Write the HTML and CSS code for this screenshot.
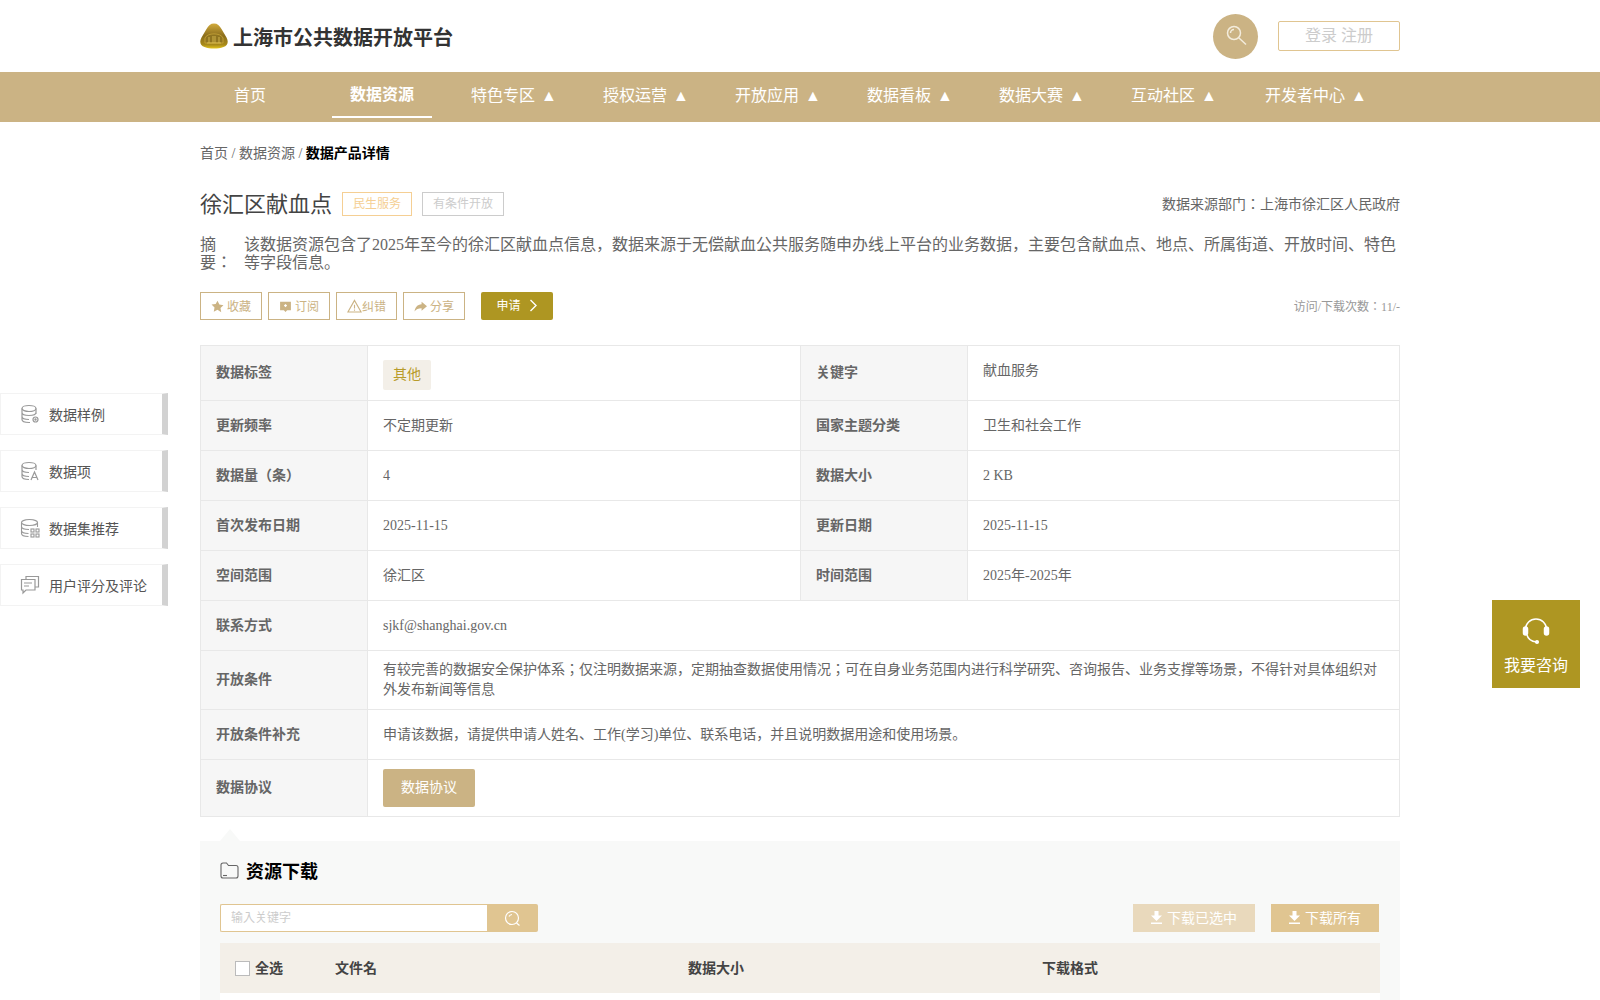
FILE: index.html
```html
<!DOCTYPE html>
<html>
<head>
    <meta charset="UTF-8">
    <title>上海市公共数据开放平台</title>
    <link rel="stylesheet" href="styles.css">
</head>
<body>
    <header class="top">
        <div class="inner top-row">
            <div class="brand">
                <svg class="brand-logo" width="28" height="26" viewBox="0 0 28 26">
                    <defs>
                        <linearGradient id="gold" x1="0" y1="0" x2="0" y2="1">
                            <stop offset="0" stop-color="#d2ab3c"/>
                            <stop offset="0.5" stop-color="#8a6d1c"/>
                            <stop offset="0.85" stop-color="#a88a1a"/>
                            <stop offset="1" stop-color="#e2c41e"/>
                        </linearGradient>
                    </defs>
                    <path d="M14 .5c3.500 0 5.500 2 7.500 5.500l5 8.500c2.500 4.500 1 8-3 9.500-5.500 2-13.500 2-19 0-4-1.500-5.500-5-3-9.500l5-8.500C8.500 2.500 10.500.5 14 .5z" fill="url(#gold)"/>
                    <path d="M5 15c2-5.500 16-5.500 18 0v5H5z" fill="#8f7420" stroke="#c9a63a" stroke-width=".8"/>
                    <path d="M9 14v6M13 13v7M15 13v7M19 14v6M7 20h14" stroke="#d8bb50" stroke-width=".9" fill="none"/>
                </svg>
                <span class="brand-name">上海市公共数据开放平台</span>
            </div>
            <div class="top-tools">
                <span class="search-circle">
                    <svg width="24" height="24" viewBox="0 0 24 24" fill="none" stroke="#f3ecdc" stroke-width="1.500">
                        <circle cx="10" cy="9" r="6.500"/>
                        <path d="M6.500 9a3.500 3.500 0 0 1 3.500-3.500M15 14l7 6.500"/>
                    </svg>
                </span>
                <a class="login-box">登录 注册</a>
            </div>
        </div>
    </header>

    <nav class="nav">
        <div class="inner nav-row">
            <a class="nav-item">首页</a>
            <a class="nav-item active">数据资源</a>
            <a class="nav-item">特色专区 <span class="arrow">▲</span></a>
            <a class="nav-item">授权运营 <span class="arrow">▲</span></a>
            <a class="nav-item">开放应用 <span class="arrow">▲</span></a>
            <a class="nav-item">数据看板 <span class="arrow">▲</span></a>
            <a class="nav-item">数据大赛 <span class="arrow">▲</span></a>
            <a class="nav-item">互动社区 <span class="arrow">▲</span></a>
            <a class="nav-item wide">开发者中心 <span class="arrow">▲</span></a>
        </div>
    </nav>

    <aside class="side">
        <a class="side-item">
            <svg width="20" height="20" viewBox="0 0 20 20" fill="none" stroke="#999" stroke-width="1.200">
                <ellipse cx="9" cy="4.500" rx="7" ry="3"/>
                <path d="M2 4.500v11c0 1.800 3 3 7 3h1M16 4.500V10M2 8.500c0 1.800 3 3 7 3s7-1.200 7-3M2 12.500c0 1.800 3 3 7 3"/>
                <circle cx="15.500" cy="15.500" r="2.500"/>
                <circle cx="15.500" cy="15.500" r=".6"/>
            </svg>
            <span>数据样例</span>
        </a>
        <a class="side-item">
            <svg width="20" height="20" viewBox="0 0 20 20" fill="none" stroke="#999" stroke-width="1.200">
                <ellipse cx="9" cy="4.500" rx="7" ry="3"/>
                <path d="M2 4.500v11c0 1.800 3 3 7 3M16 4.500V9M2 8.500c0 1.800 3 3 7 3M2 12.500c0 1.800 3 3 7 3M11 19l3.500-8 3.500 8M12.300 16.500h4.400"/>
            </svg>
            <span>数据项</span>
        </a>
        <a class="side-item">
            <svg width="20" height="20" viewBox="0 0 20 20" fill="none" stroke="#999" stroke-width="1.100">
                <ellipse cx="9.500" cy="4.500" rx="8" ry="3"/>
                <path d="M1.500 4.500v11c0 1.800 3 3 7 3M17.500 4.500V9M1.500 8.500c0 1.800 3 3 7.500 3M1.500 12.500c0 1.800 3 3 7 3"/>
                <rect x="11" y="11" width="3" height="3"/><rect x="16" y="11" width="3" height="3"/>
                <rect x="11" y="16" width="3" height="3"/><rect x="16" y="16" width="3" height="3"/>
            </svg>
            <span>数据集推荐</span>
        </a>
        <a class="side-item">
            <svg width="20" height="20" viewBox="0 0 20 20" fill="none" stroke="#999" stroke-width="1.200">
                <path d="M6 4V1.500h12.500V12H15"/>
                <path d="M1.500 4.500H15V15H6l-3 3v-3H1.500z"/>
                <path d="M4 8h8M4 11h5"/>
            </svg>
            <span>用户评分及评论</span>
        </a>
    </aside>

    <a class="consult">
        <svg width="28" height="28" viewBox="0 0 28 28" fill="none" stroke="#fff" stroke-width="1.500">
            <path d="M3.500 12a10.500 10 0 0 1 21 0"/>
            <rect x="1.500" y="10" width="4" height="8" rx="2" fill="#fff"/>
            <rect x="22.500" y="10" width="4" height="8" rx="2" fill="#fff"/>
            <path d="M5 18c1 4 5 6.500 9.500 7"/>
            <circle cx="15" cy="25" r="1.300" fill="#fff"/>
        </svg>
        <span>我要咨询</span>
    </a>

    <main class="inner">
        <div class="crumbs">首页 / 数据资源 / <b>数据产品详情</b></div>

        <div class="title-row">
            <h1 class="title">徐汇区献血点</h1>
            <span class="tag tag-gold">民生服务</span>
            <span class="tag tag-grey">有条件开放</span>
            <span class="source">数据来源部门：上海市徐汇区人民政府</span>
        </div>

        <div class="abstract">
            <span class="abstract-label">摘要：</span>
            <p class="abstract-text">该数据资源包含了2025年至今的徐汇区献血点信息，数据来源于无偿献血公共服务随申办线上平台的业务数据，主要包含献血点、地点、所属街道、开放时间、特色等字段信息。</p>
        </div>

        <div class="action-row">
            <a class="action">
                <svg width="13" height="13" viewBox="0 0 24 24" fill="#cbb384"><path d="M12 1.500l3.400 7 7.600 1-5.500 5.300 1.400 7.700L12 18l-6.900 3.500 1.400-7.700L1 8.500l7.600-1z"/></svg>
                收藏
            </a>
            <a class="action">
                <svg width="13" height="13" viewBox="0 0 24 24" fill="#cbb384"><path d="M2 3h20v16h-7l-3 3-3-3H2zM12 7.500l-3 2.500 3 3.500 3-3.500z" fill-rule="evenodd"/></svg>
                订阅
            </a>
            <a class="action tight">
                <svg width="15" height="14" viewBox="0 0 24 22" fill="none" stroke="#cbb384" stroke-width="1.800"><path d="M12 2L1.500 20.500h21zM12 9v6M12 16.500v2"/></svg>
                纠错
            </a>
            <a class="action">
                <svg width="13" height="13" viewBox="0 0 24 24" fill="#cbb384"><path d="M14 3l10 8.500L14 20v-5C8 15 4 17 1 21c1-7 5-12.500 13-13z"/></svg>
                分享
            </a>
            <a class="apply">申请
                <svg width="9" height="13" viewBox="0 0 9 13" fill="none" stroke="#fff" stroke-width="1.400"><path d="M1.500 1l5.500 5.500L1.500 12"/></svg>
            </a>
            <span class="visits">访问/下载次数：11/-</span>
        </div>

        <table class="info">
            <colgroup>
                <col class="col-label"><col class="col-value"><col class="col-label"><col>
            </colgroup>
            <tr class="row-tags">
                <th>数据标签</th>
                <td><span class="chip">其他</span></td>
                <th>关键字</th>
                <td class="keyword">献血服务</td>
            </tr>
            <tr>
                <th>更新频率</th><td>不定期更新</td>
                <th>国家主题分类</th><td>卫生和社会工作</td>
            </tr>
            <tr>
                <th>数据量（条）</th><td>4</td>
                <th>数据大小</th><td>2 KB</td>
            </tr>
            <tr>
                <th>首次发布日期</th><td>2025-11-15</td>
                <th>更新日期</th><td>2025-11-15</td>
            </tr>
            <tr>
                <th>空间范围</th><td>徐汇区</td>
                <th>时间范围</th><td>2025年-2025年</td>
            </tr>
            <tr>
                <th>联系方式</th><td colspan="3">sjkf@shanghai.gov.cn</td>
            </tr>
            <tr class="row-auto">
                <th>开放条件</th>
                <td colspan="3">有较完善的数据安全保护体系；仅注明数据来源，定期抽查数据使用情况；可在自身业务范围内进行科学研究、咨询报告、业务支撑等场景，不得针对具体组织对外发布新闻等信息</td>
            </tr>
            <tr>
                <th>开放条件补充</th>
                <td colspan="3">申请该数据，请提供申请人姓名、工作(学习)单位、联系电话，并且说明数据用途和使用场景。</td>
            </tr>
            <tr class="row-agree">
                <th>数据协议</th>
                <td colspan="3"><a class="agree-btn">数据协议</a></td>
            </tr>
        </table>

        <section class="download">
            <h2 class="download-title">
                <svg width="19" height="17" viewBox="0 0 19 17" fill="none" stroke="#666" stroke-width="1.100">
                    <path d="M1 3a2 2 0 0 1 2-2h3.500l2 2.500H16a2 2 0 0 1 2 2V14a2 2 0 0 1-2 2H3a2 2 0 0 1-2-2z"/>
                    <path d="M3 13.500h4"/>
                </svg>
                资源下载
            </h2>
            <div class="tools">
                <div class="search">
                    <input class="search-input" placeholder="输入关键字">
                    <span class="search-btn">
                        <svg width="17" height="17" viewBox="0 0 17 17" fill="none" stroke="#fff" stroke-width="1.200">
                            <circle cx="8" cy="8" r="6.500"/>
                            <path d="M5 6.500a3.500 3.500 0 0 1 3-2M12.500 13l3 2.500"/>
                        </svg>
                    </span>
                </div>
                <div class="dl-group">
                    <a class="dl-btn dim">
                        <svg width="11" height="13" viewBox="0 0 11 13" fill="#fff"><path d="M3.500 0h4v4.500H11l-5.500 5.500L0 4.500h3.500zM0 11.500h11V13H0z"/></svg>
                        下载已选中
                    </a>
                    <a class="dl-btn">
                        <svg width="11" height="13" viewBox="0 0 11 13" fill="#fff"><path d="M3.500 0h4v4.500H11l-5.500 5.500L0 4.500h3.500zM0 11.500h11V13H0z"/></svg>
                        下载所有
                    </a>
                </div>
            </div>
            <div class="file-head">
                <label class="col-check"><span class="check"></span>全选</label>
                <span class="col-name">文件名</span>
                <span class="col-size">数据大小</span>
                <span class="col-format">下载格式</span>
            </div>
            <div class="file-body"></div>
        </section>
    </main>
</body>
</html>
```

FILE: styles.css
```css
* {
    box-sizing: border-box;
}
body {
    margin: 0;
    color: #666;
    background: #fff;
    font-family: "Liberation Serif", "Noto Sans CJK JP", serif;
    font-size: 14px;
}
.inner {
    width: 1200px;
    margin: 0 auto;
}
.top {
    height: 72px;
}
.top-row {
    display: flex;
    align-items: center;
    justify-content: space-between;
    height: 72px;
}
.brand {
    display: flex;
    align-items: center;
    gap: 5px;
}
.brand-name {
    font-size: 20px;
    font-weight: bold;
    color: #333;
}
.top-tools {
    display: flex;
    align-items: center;
    gap: 20px;
}
.search-circle {
    display: flex;
    align-items: center;
    justify-content: center;
    width: 45px;
    height: 45px;
    border-radius: 50%;
    background: #cbb384;
}
.login-box {
    width: 122px;
    height: 30px;
    line-height: 28px;
    text-align: center;
    font-size: 16px;
    color: #ccc;
    border: 1px solid #e0c591;
    border-radius: 2px;
}
.nav {
    height: 50px;
    background: #cbb384;
}
.nav-row {
    display: flex;
    gap: 32px;
}
.nav-item {
    width: 100px;
    height: 46px;
    line-height: 47px;
    text-align: center;
    white-space: nowrap;
    font-size: 16px;
    color: #fff;
}
.nav-item.wide {
    width: 120px;
}
.nav-item.active {
    font-weight: bold;
    line-height: 45px;
    border-bottom: 2px solid #fff;
    height: 46px;
}
.arrow {
    margin-left: 2px;
}
.side {
    position: absolute;
    left: 0;
    top: 393px;
    width: 168px;
}
.side-item {
    display: flex;
    align-items: center;
    gap: 9px;
    height: 42px;
    margin-bottom: 15px;
    padding: 0 0 1px 20px;
    color: #555;
    background: #fff;
    border: 1px solid #f3f3f3;
    border-right: 6px solid #d2d2d2;
}
.side-item svg {
    margin-left: -1px;
}
.consult {
    position: fixed;
    left: 1492px;
    top: 600px;
    display: flex;
    flex-direction: column;
    align-items: center;
    width: 88px;
    height: 88px;
    padding-top: 17px;
    color: #fff;
    font-size: 16px;
    background: #ae9622;
}
.consult span {
    margin-top: 7px;
}
.crumbs {
    padding-top: 23px;
    height: 63px;
    line-height: 18px;
    color: #666;
}
.crumbs b {
    color: #000;
}
.title-row {
    display: flex;
    align-items: center;
    gap: 10px;
    height: 24px;
    margin-top: 7px;
}
.title {
    margin: 0 0 5px;
    font-size: 22px;
    font-weight: normal;
    color: #444;
}
.tag {
    height: 24px;
    line-height: 22px;
    padding: 0 10px;
    font-size: 12px;
    border: 1px solid;
}
.tag-gold {
    color: #f5cf94;
    border-color: #f5cf94;
}
.tag-grey {
    color: #ccc;
    border-color: #ccc;
}
.source {
    margin-left: auto;
    margin-bottom: 2px;
    color: #666;
}
.abstract {
    display: flex;
    margin-top: 20px;
    font-size: 16px;
    line-height: 18px;
    color: #666;
}
.abstract-label {
    flex: none;
    width: 32px;
    margin-right: 12px;
}
.abstract-text {
    margin: 0;
}
.action-row {
    display: flex;
    align-items: center;
    gap: 6px;
    height: 28px;
    margin-top: 20px;
}
.action {
    display: flex;
    align-items: center;
    justify-content: center;
    gap: 3px;
    width: 62px;
    height: 28px;
    font-size: 12px;
    color: #cbb384;
    border: 1px solid #cbb384;
}
.action.tight {
    gap: 0;
    width: 61px;
}
.apply {
    display: flex;
    align-items: center;
    justify-content: center;
    gap: 8px;
    width: 72px;
    height: 28px;
    margin-left: 10px;
    padding-bottom: 2px;
    font-size: 12px;
    color: #fff;
    background: #ae9622;
    border-radius: 2px;
}
.visits {
    margin-left: auto;
    font-size: 12px;
    color: #999;
}
.info {
    width: 1200px;
    margin-top: 25px;
    table-layout: fixed;
    border-collapse: collapse;
}
.col-label {
    width: 167px;
}
.col-value {
    width: 433px;
}
.info tr {
    height: 50px;
}
.info th,
.info td {
    padding: 0 15px;
    text-align: left;
    line-height: 20px;
    font-size: 14px;
    color: #666;
    border: 1px solid #e8e8e8;
}
.info th {
    background: #f6f6f6;
    font-weight: bold;
}
.info .row-tags {
    height: 55px;
}
.info .row-auto {
    height: 59px;
}
.info .row-agree {
    height: 57px;
}
.info .keyword {
    padding-bottom: 4px;
}
.chip {
    display: inline-block;
    width: 48px;
    height: 30px;
    margin-top: 4px;
    line-height: 30px;
    text-align: center;
    font-weight: normal;
    color: #b89b2a;
    background: #f3efe8;
    border-radius: 2px;
}
.agree-btn {
    display: block;
    width: 92px;
    height: 38px;
    line-height: 38px;
    text-align: center;
    color: #fff;
    background: #cbb384;
    border-radius: 2px;
}
.download {
    position: relative;
    margin-top: 24px;
    padding: 0 20px;
    background: #f8f9f8;
}
.download::before {
    content: "";
    position: absolute;
    left: 20px;
    top: -12px;
    border-left: 10px solid transparent;
    border-right: 10px solid transparent;
    border-bottom: 12px solid #f8f9f8;
}
.download-title {
    display: flex;
    align-items: center;
    gap: 7px;
    height: 58px;
    margin: 0 0 2px;
    font-size: 18px;
    color: #000;
}
.tools {
    display: flex;
    justify-content: space-between;
    height: 28px;
    margin-top: 5px;
}
.search {
    display: flex;
    width: 318px;
}
.search-input {
    width: 267px;
    height: 28px;
    padding: 0 10px;
    font-family: inherit;
    font-size: 12px;
    background: #fff;
    border: 1px solid #e0c591;
    border-right: none;
    border-radius: 2px 0 0 2px;
    outline: none;
}
.search-input::placeholder {
    color: #ccc;
}
.search-btn {
    display: flex;
    align-items: center;
    justify-content: center;
    width: 51px;
    height: 28px;
    background: #e0c591;
    border-radius: 0 2px 2px 0;
}
.dl-group {
    display: flex;
    gap: 16px;
    margin-right: 1px;
}
.dl-btn {
    display: flex;
    align-items: center;
    justify-content: center;
    gap: 5px;
    width: 108px;
    height: 28px;
    padding-bottom: 2px;
    color: #fff;
    background: #e0c591;
}
.dl-btn.dim {
    width: 122px;
    background: #e9d9bc;
}
.file-head {
    display: flex;
    align-items: center;
    height: 50px;
    margin-top: 11px;
    padding-bottom: 2px;
    font-weight: bold;
    color: #444;
    background: #f3efe8;
}
.col-check {
    display: flex;
    align-items: center;
    gap: 5px;
    width: 115px;
    padding-left: 15px;
}
.check {
    width: 15px;
    height: 15px;
    margin-top: 2px;
    background: #fff;
    border: 1px solid #bbb;
}
.col-name {
    width: 353px;
}
.col-size {
    width: 354px;
}
.file-body {
    height: 60px;
    background: #fff;
}
```
